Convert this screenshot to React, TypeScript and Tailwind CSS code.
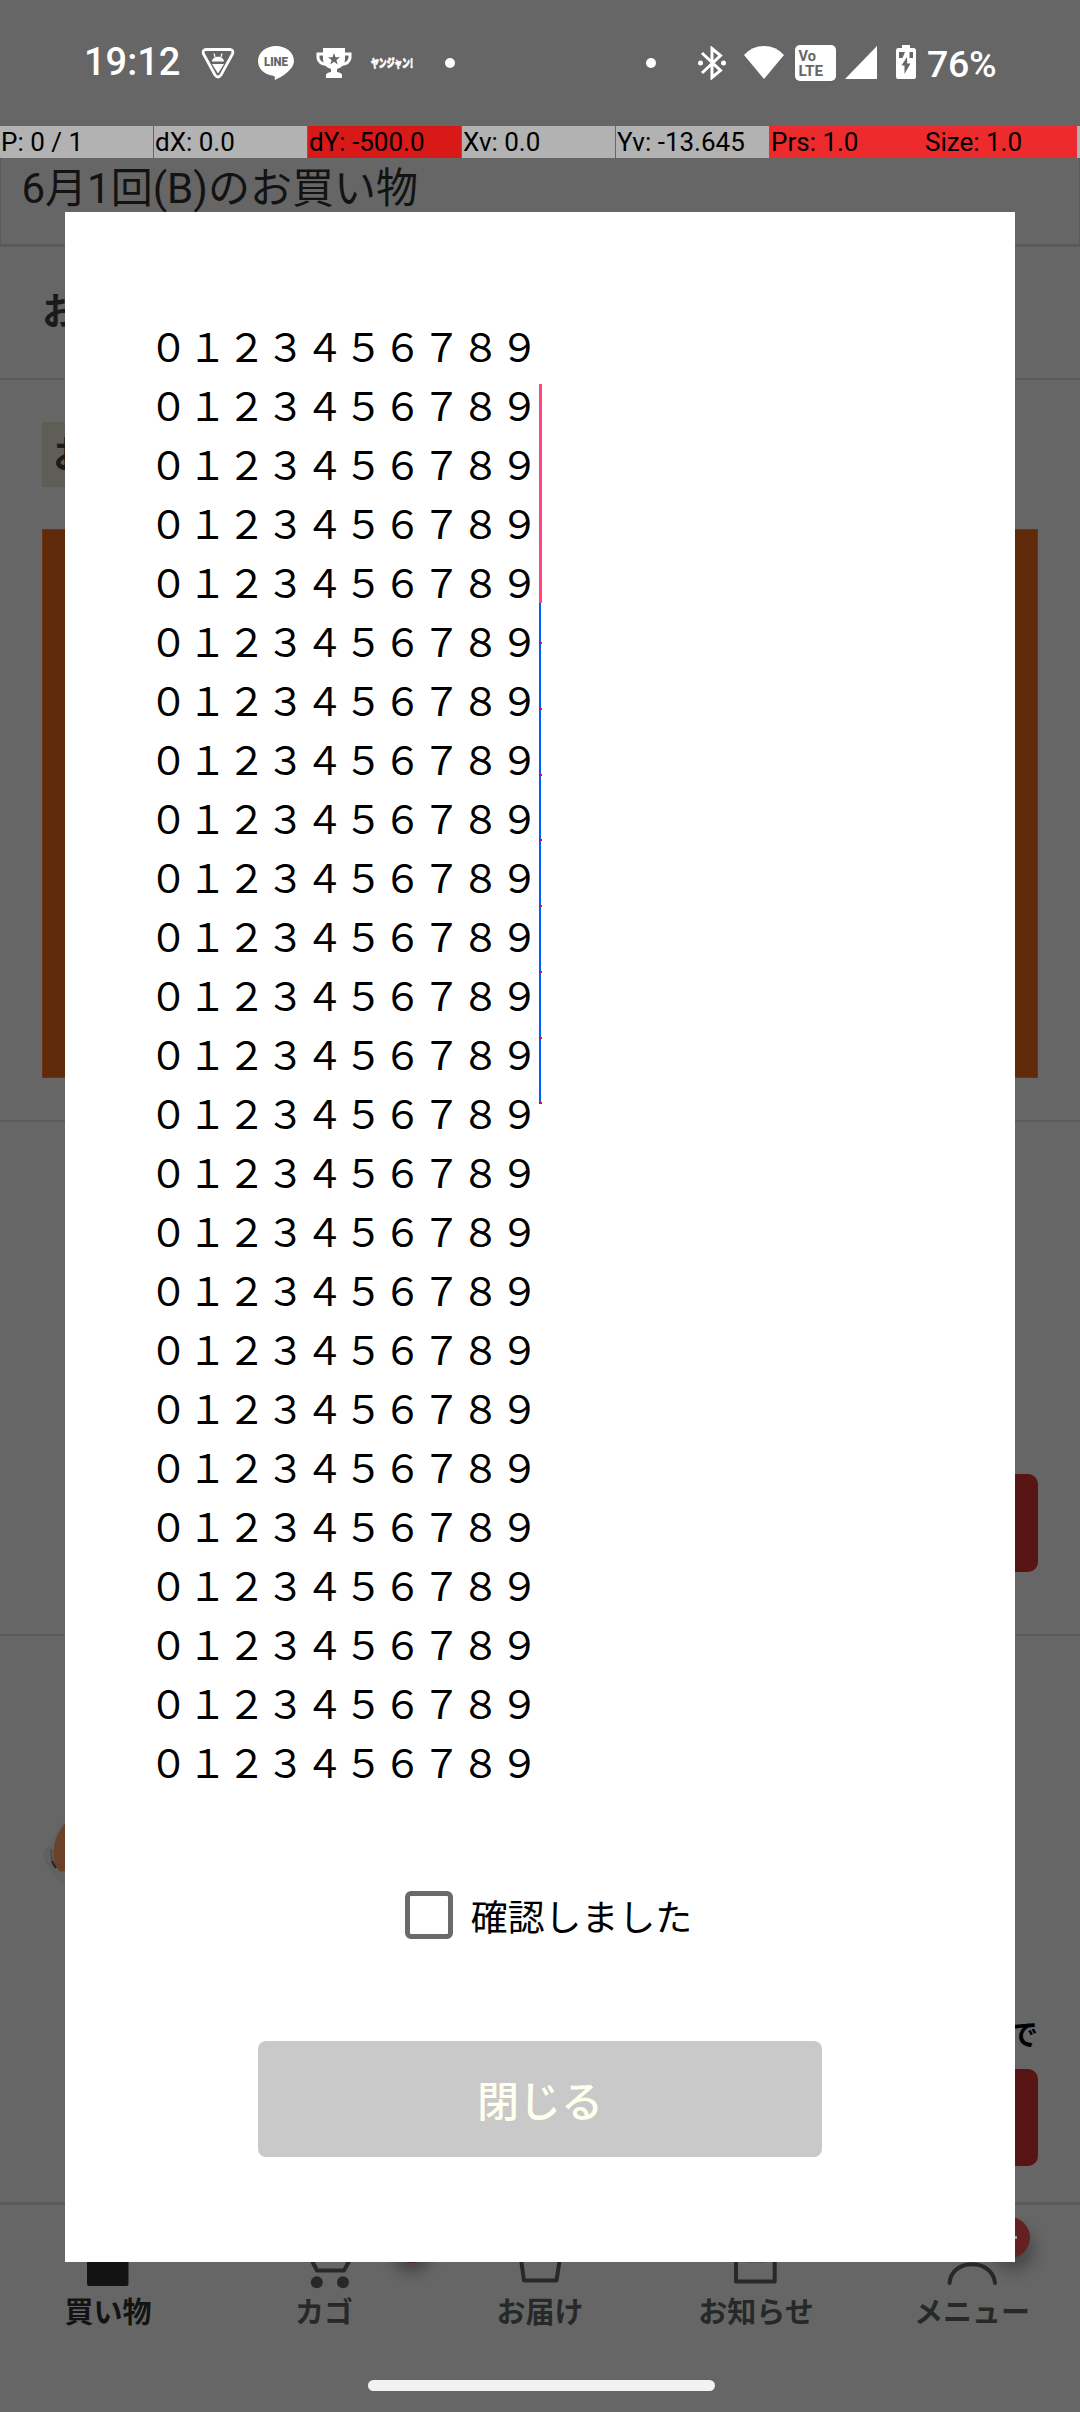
import React from 'react';

const rows = Array.from({ length: 25 }, (_, i) => i);
// Full-width digits 0 to 9.
const digits = '\uFF10\uFF11\uFF12\uFF13\uFF14\uFF15\uFF16\uFF17\uFF18\uFF19';
const touchPoints = [642, 708, 774, 839, 905, 971, 1037, 1102];

const metrics = [
  { text: 'P: 0 / 1', cell: 'w-[153px] bg-[#b2b2b2]' },
  { text: 'dX: 0.0', cell: 'w-[153px] bg-[#b2b2b2]' },
  { text: 'dY: -500.0', cell: 'w-[153px] bg-[#d91818]' },
  { text: 'Xv: 0.0', cell: 'w-[153px] bg-[#b2b2b2]' },
  { text: 'Yv: -13.645', cell: 'w-[153px] bg-[#b2b2b2]' },
  { text: 'Prs: 1.0', cell: 'w-[153px] bg-[#ed2b2d]' },
  { text: 'Size: 1.0', cell: 'w-[153px] bg-[#ed2b2d]' },
];

function StatusBar() {
  return (
    <div className="flex h-[126px] shrink-0 items-start pt-[42px] text-white">
      <span className="ml-[84px] mt-[-1px] w-[117px] font-[Roboto] text-[38px] font-medium leading-[42px]">19:12</span>
      <svg className="mt-[5px] h-8 w-[34px]" viewBox="0 0 34 32" fill="none">
        <path d="M5 2.5H29Q33 3 31.5 7L20 28Q17 32 14 28L2.500 7Q1 3 5 2.500Z" stroke="#fff" strokeWidth="2.800" />
        <path d="M11 14.500C11 8 23 8 23 14.500ZM11 17H23L17 26.500Z" fill="#fff" />
        <path d="M13 6.500L14 10M21 6.500L20 10" stroke="#fff" strokeWidth="1.200" />
      </svg>
      <svg className="ml-[23px] mt-[4px] h-[34px] w-9" viewBox="0 0 36 34">
        <path d="M18 0C8 0 0 6.500 0 15c0 7.500 6 13.500 15 14.700 2.200.4 2 1.300 1.700 4.300C23 31.500 36 23.500 36 15 36 6.500 28 0 18 0Z" fill="#fff" />
        <text x="6" y="19.800" fontFamily="Roboto" fontSize="12" fontWeight="900" textLength="24" lengthAdjust="spacingAndGlyphs" fill="#666">LINE</text>
      </svg>
      <svg className="ml-[22px] mt-[6px] h-[31px] w-9" viewBox="0 0 36 31">
        <path d="M8 6H2v4q1 6 9 6.500M28 6h6v4q-1 6-9 6.500" fill="none" stroke="#fff" strokeWidth="3" />
        <path d="M7 0H29V12Q28 19 21 21V24Q26 25 26 27V30H10V27Q10 25 15 24V21Q8 19 7 12Z" fill="#fff" />
        <path d="M18 5l1.500 4.300h4.500l-3.600 2.700 1.300 4.400L18 13.700l-3.700 2.700 1.300-4.400L12 9.300h4.500Z" fill="#666" />
      </svg>
      <svg className="ml-[18px] mt-[9px] h-6 w-[46px] overflow-visible" viewBox="0 0 46 24">
        <text x="1" y="16.500" fontFamily="'Noto Sans CJK JP'" fontSize="12" fontWeight="900" textLength="42" lengthAdjust="spacingAndGlyphs" fill="#fff" stroke="#fff" strokeWidth="0.700">ヤンジャン!</text>
      </svg>
      <span className="ml-[29px] mt-[16px] size-[10px] rounded-full bg-white" />
      <span className="ml-[191px] mt-[16px] size-[10px] rounded-full bg-white" />
      <svg className="ml-[42px] mt-[4px] h-[34px] w-[28px]" viewBox="0 0 28 34" fill="none" stroke="#fff" strokeWidth="3">
        <path d="M4 7L22.500 24.500L14 31.500V2.500L22.500 9.500L4 27" />
        <g fill="#fff" stroke="none"><circle cx="2.500" cy="17" r="2.500" /><circle cx="25.500" cy="17" r="2.500" /></g>
      </svg>
      <svg className="ml-[18px] mt-[4px] h-[33px] w-[40px]" viewBox="0 0 40 33"><path d="M0 9Q8 0 20 0T40 9L20 33Z" fill="#fff" /></svg>
      <svg className="ml-[11px] mt-[3px] h-9 w-[41px]" viewBox="0 0 41 36">
        <rect width="41" height="36" rx="5" fill="#fff" />
        <text x="3.500" y="15.500" fontFamily="Roboto" fontSize="14.500" fontWeight="700" fill="#666">Vo</text>
        <text x="3.500" y="31" fontFamily="Roboto" fontSize="15.500" fontWeight="700" textLength="24.500" lengthAdjust="spacingAndGlyphs" fill="#666">LTE</text>
      </svg>
      <svg className="ml-[9px] mt-[4px] h-[33px] w-8" viewBox="0 0 32 33"><path d="M32 0V33H0Z" fill="#fff" /></svg>
      <svg className="ml-[19px] mt-[3px] h-[34px] w-5" viewBox="0 0 20 34">
        <path d="M6 0H14V3H18Q20 3 20 5.500V32Q20 34 18 34H2Q0 34 0 32V5.500Q0 3 2 3H6Z" fill="#fff" />
        <path d="M3 7H9L6.500 13H3ZM13.500 7H17V13H13.500ZM11 12L5.500 20.500H8.500V29L14.500 18.500H11.200Z" fill="#666" />
      </svg>
      <span className="ml-[11px] mt-px font-[Roboto] text-[37.500px] font-medium leading-[42px] tracking-[-0.300px]">76%</span>
    </div>
  );
}

function MetricsBar() {
  return (
    <div className="flex h-8 shrink-0 gap-px bg-[#666]">
      {metrics.map((m) => (
        <div key={m.text} className={`${m.cell} shrink-0 whitespace-nowrap pl-px font-[Roboto] text-[26px] leading-[33px] text-black`}>
          {m.text}
        </div>
      ))}
      <div className="-ml-px grow bg-[#b2b2b2]" />
    </div>
  );
}

function NavItem({ label, active, children }: { label: string; active?: boolean; children: React.ReactNode }) {
  return (
    <div className={`relative flex w-[216px] flex-col items-center ${active ? 'text-[#131313]' : 'text-[#262928]'}`}>
      <svg className="mt-[25px] h-[60px] w-[60px]" viewBox="0 0 60 60" fill="none" stroke="currentColor" strokeWidth="4" strokeLinecap="round" strokeLinejoin="round">
        {children}
      </svg>
      <span className="-mt-px text-[29px] font-bold leading-[42px]">{label}</span>
    </div>
  );
}

function BottomNav() {
  return (
    <div className="relative flex h-[207px] shrink-0">
      <NavItem label="買い物" active>
        <path d="M11 20H48.500V54H11Z" fill="currentColor" />
      </NavItem>
      <NavItem label="カゴ">
        <path d="M14.500 24L23 40.500H50L59 24" />
        <g fill="currentColor" stroke="none"><circle cx="22.800" cy="52.300" r="6" /><circle cx="49" cy="52.300" r="6" /></g>
      </NavItem>
      <NavItem label="お届け">
        <path d="M9 15L14 50.500H46.500L52 15" />
      </NavItem>
      <NavItem label="お知らせ">
        <path d="M10 8H48.700V51.500H10ZM20 30.300H39" />
      </NavItem>
      <NavItem label="メニュー">
        <path d="M7.500 53C9.500 28 50.500 28 53 53" />
      </NavItem>
      <span className="absolute left-[391px] top-[17px] size-[41px] rounded-full bg-[#651b1d] shadow-[0_10px_14px_rgba(0,0,0,0.3)]" />
      <span className="absolute left-[989px] top-[12px] flex size-[41px] items-center justify-center rounded-full bg-[#652021] shadow-[4px_12px_16px_rgba(0,0,0,0.3)]">
        <span className="h-[3px] w-[14px] bg-[#999]" />
      </span>
    </div>
  );
}

function ShopPage() {
  return (
    <>
      <div className="h-[89px] shrink-0 border-x border-b-[3px] border-[#5a5a5a] pl-[20.500px] pt-px font-[Roboto,'Noto_Sans_CJK_JP',sans-serif] text-[42px] leading-[60px] text-[#131313]">
        6月1回(B)のお買い物
      </div>
      <div className="h-[133px] shrink-0 border-b-2 border-[#5a5a5a] pl-[42px] pt-[32px] text-[37px] font-bold leading-[60px] text-[#191b1a]">お</div>
      <div className="flex h-[742px] shrink-0 flex-col items-start border-b-2 border-[#5a5a5a] px-[42px] pt-[42px]">
        <div className="h-[65px] bg-[#5f5e56] px-[11px] text-[37px] font-bold leading-[60px] text-[#191b1a]">お</div>
        <div className="mt-[42px] h-[549px] w-full border border-[#6a3410] bg-[#5e2a0a]" />
      </div>
      <div className="flex h-[514px] shrink-0 items-end justify-end border-b-2 border-[#5a5a5a] px-[42px] pb-[62px]">
        <div className="h-[98px] w-[400px] rounded-[10px] bg-[#591414]" />
      </div>
      <div className="flex h-[569px] shrink-0 flex-col border-b-[3px] border-[#5a5a5a] px-[42px] pt-[180px]">
        <svg className="h-[75px] w-[60px]" viewBox="0 0 60 75">
          <path d="M26 0Q15 12 9 30Q1 30 1 40Q3 51 13 60L30 78Z" fill="#606363" />
          <path d="M7 32Q2 36 5 46L12 55" fill="none" stroke="#5c5d60" strokeWidth="1.500" />
          <path d="M26 4Q12 18 11.500 36Q11 51 19 56L26 53V4Z" fill="#6b4228" />
          <path d="M9 33L10 47L13 52" fill="none" stroke="#54464a" strokeWidth="2" />
          <path d="M10 45L14 52" fill="none" stroke="#33221c" strokeWidth="2" />
        </svg>
        <div className="mt-[119px] self-end text-[29px] font-bold leading-[46px] text-black">で</div>
        <div className="mt-[13px] h-[97px] w-[400px] self-end rounded-[10px] bg-[#591414]" />
      </div>
    </>
  );
}

function ConfirmDialog() {
  return (
    <div className="absolute left-[65px] top-[212px] flex h-[2050px] w-[950px] flex-col items-center bg-white">
      <div className="mt-[104px] self-start pl-[84px] text-[39px] leading-[59px] text-black">
        {rows.map((r) => (
          <p key={r} className="h-[59px] whitespace-nowrap">{digits}</p>
        ))}
      </div>
      <label className="ml-[17px] mt-[100px] flex h-12 items-center text-[36.900px] text-black">
        <span className="mr-[18px] size-12 rounded-[6px] border-[5px] border-[#6a6a6a]" />
        <span className="relative top-px">確認しました</span>
      </label>
      <button className="mt-[102px] h-[116px] w-[564px] rounded-lg bg-[#c9c9c9] pb-[2px] text-[42px] font-medium text-[#ffffee]">閉じる</button>
    </div>
  );
}

// Trail left by the pointer, with a mark at every sampled position.
function TouchTrail() {
  return (
    <>
      <div className="absolute left-[538.500px] top-[384px] h-[219px] w-[3.500px] bg-[#ff4582]" />
      <div className="absolute left-[539px] top-[603px] h-[500px] w-[2px] bg-[#0060ff]" />
      {touchPoints.map((y) => (
        <div key={y} className="absolute left-[538.500px] h-[2px] w-[3px] bg-[#ff0018]" style={{ top: y }} />
      ))}
    </>
  );
}

export default function App() {
  return (
    <div lang="ja" className="relative flex h-[2412px] w-[1080px] flex-col overflow-hidden bg-[#666] font-['Noto_Sans_CJK_JP',sans-serif]">
      <StatusBar />
      <MetricsBar />
      <ShopPage />
      <BottomNav />
      <ConfirmDialog />
      <TouchTrail />
      <div className="absolute left-[368px] top-[2380px] h-[11px] w-[347px] rounded-full bg-[#f2f2f2]" />
    </div>
  );
}
